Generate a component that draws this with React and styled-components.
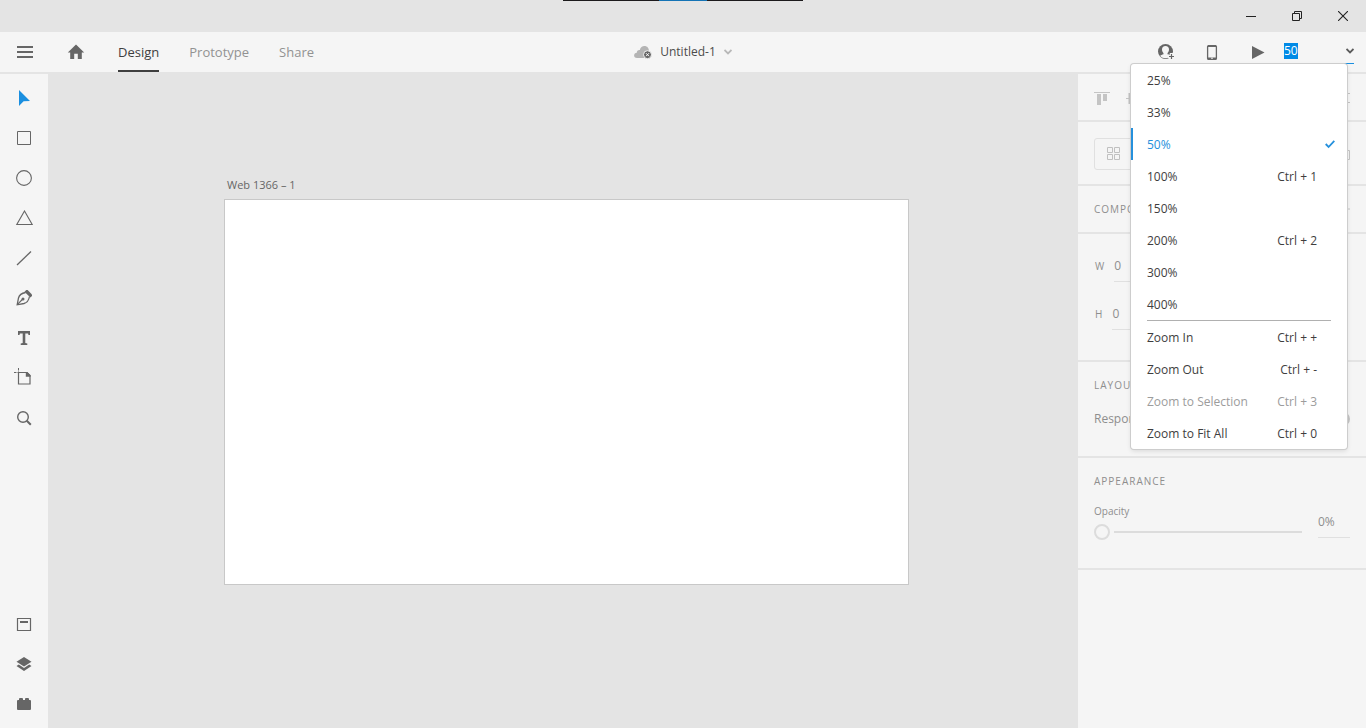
import React, { useEffect, useRef, useState } from "react";
import styled, { createGlobalStyle, css } from "styled-components";

const GlobalStyle = createGlobalStyle`
  *, *::before, *::after { box-sizing: border-box; }
  body {
    margin: 0;
    background: #e4e4e4;
    color: #4b4b4b;
    font: 12px/16px "Open Sans", "Noto Sans", sans-serif;
  }
  button, input { font: inherit; color: inherit; }
  button { border: 0; padding: 0; background: none; cursor: pointer; }
`;

const Page = styled.div`
  min-height: 100vh;
  display: flex;
  flex-direction: column;
`;

const TitleBar = styled.div`
  position: relative;
  height: 32px;
  display: flex;
  justify-content: flex-end;
`;

const TopStrip = styled.div`
  position: absolute;
  top: 0;
  left: 0;
  right: 0;
  display: flex;
  justify-content: center;
`;

const StripPart = styled.span`
  width: ${(p) => (p.$active ? 48 : 96)}px;
  height: 1px;
  background: ${(p) => (p.$active ? "#1473b5" : "#1c1a1c")};
`;

const WindowButton = styled.button`
  width: 46px;
  display: flex;
  align-items: center;
  justify-content: center;
  color: #222;
`;

const Header = styled.header`
  height: 42px;
  display: grid;
  grid-template-columns: 1fr auto 1fr;
  background: #f5f5f5;
  border-bottom: 2px solid #e4e4e4;
`;

const HeaderLeft = styled.div`
  display: flex;
  align-items: stretch;
  padding-left: 16px;
`;

const IconButton = styled.button`
  display: flex;
  align-items: center;
  color: #666;
`;

const HomeLink = styled.a`
  display: flex;
  align-items: center;
  margin-left: 33px;
  color: #666;
`;

const Tabs = styled.nav`
  display: flex;
  gap: 30px;
  margin-left: 33px;
`;

const Tab = styled.a`
  display: flex;
  align-items: center;
  font-size: 13px;
  text-decoration: none;
  color: ${(p) => (p.$active ? "#3e3e3e" : "#929292")};
  box-shadow: ${(p) => (p.$active ? "inset 0 -2px #3e3e3e" : "none")};
`;

const DocumentButton = styled.button`
  display: flex;
  align-items: center;
  gap: 8px;
  color: #4b4b4b;
`;

const HeaderRight = styled.div`
  display: flex;
  justify-content: flex-end;
  padding-right: 12px;
`;

const HeaderActions = styled.div`
  display: flex;
  gap: 28px;
  margin-right: 17px;
`;

const ZoomBox = styled.div`
  position: relative;
  width: 70px;
  height: 32px;
  display: flex;
  align-items: flex-end;
  padding-bottom: 4px;
  border-bottom: 1px solid #1a8fe0;
`;

const ZoomInput = styled.input`
  flex: 1;
  min-width: 0;
  height: 16px;
  padding: 0;
  border: 0;
  outline: 0;
  background: none;
  line-height: 16px;
  &::selection { background: #008ae6; color: #fff; }
`;

const ZoomToggle = styled.button`
  height: 16px;
  display: flex;
  align-items: center;
  color: #5a5a5a;
`;

const Menu = styled.div`
  position: absolute;
  z-index: 2;
  top: 32px;
  right: 7px;
  width: 216px;
  background: #fff;
  border-radius: 3px;
  box-shadow: 0 0 0 1px #cdcdcd, 0 2px 5px rgba(0, 0, 0, 0.12);
`;

const MenuItem = styled.button`
  width: 100%;
  height: 32px;
  display: flex;
  align-items: center;
  justify-content: space-between;
  padding: 2px 12px 0 16px;
  color: #3e3e3e;
  &:disabled { color: #9c9c9c; cursor: default; }
  ${(p) =>
    p.$selected &&
    css`
      color: #2590dc;
      box-shadow: inset 2px 0 #2590dc;
    `}
`;

const Shortcut = styled.span`
  margin-right: 18px;
`;

const MenuDivider = styled.hr`
  height: 1px;
  margin: 0 16px;
  border: 0;
  background: #b0b0b0;
`;

const Workspace = styled.div`
  flex: 1;
  display: flex;
`;

const ToolBar = styled.aside`
  width: 48px;
  display: flex;
  flex-direction: column;
  justify-content: space-between;
  padding: 4px 0;
  background: #f5f5f5;
`;

const ToolButton = styled.button`
  width: 48px;
  height: 40px;
  display: flex;
  align-items: center;
  justify-content: center;
  color: ${(p) => (p.$active ? "#1a8fe0" : "#666")};
`;

const Canvas = styled.main`
  flex: 1;
  padding: 103px 169px 48px 176px;
`;

const ArtboardLabel = styled.div`
  padding: 0 3px;
  margin-bottom: 6px;
  font-size: 11px;
  color: #666;
`;

const Artboard = styled.div`
  aspect-ratio: 685 / 386;
  background: #fff;
  border: 1px solid #c8c8c8;
`;

const Inspector = styled.aside`
  width: 288px;
  background: #f5f5f5;
  color: #8e8e8e;
`;

const Section = styled.section`
  padding: ${(p) => p.$pad || "16px"};
  border-bottom: 2px solid #e4e4e4;
`;

const SpreadRow = styled.div`
  display: flex;
  align-items: center;
  justify-content: space-between;
  margin-top: ${(p) => p.$top || 0}px;
`;

const AlignGroup = styled.div`
  display: flex;
  gap: 16px;
`;

const AlignButton = styled.button`
  width: 16px;
  height: 16px;
  display: flex;
  color: #c4c4c4;
`;

const GridButton = styled.button`
  width: 160px;
  height: 32px;
  display: flex;
  align-items: center;
  padding-left: 12px;
  border: 1px solid #e0e0e0;
  border-radius: 3px;
  color: #c0c0c0;
`;

const SectionTitle = styled.h2`
  margin: 0;
  font-size: 10px;
  line-height: 16px;
  font-weight: 400;
  letter-spacing: 1px;
  text-transform: uppercase;
`;

const Fields = styled.div`
  display: flex;
  flex-direction: column;
  gap: 16px;
`;

const Field = styled.label`
  height: 32px;
  width: 112px;
  display: flex;
  align-items: center;
  gap: 10px;
  padding-left: 1px;
  font-size: 10px;
`;

const NumberInput = styled.input`
  flex: 1;
  min-width: 0;
  height: 32px;
  padding: 0;
  border: 0;
  border-bottom: 1px solid #e0e0e0;
  background: none;
  font-size: 12px;
`;

const Switch = styled.input`
  appearance: none;
  width: 26px;
  height: 14px;
  margin: 0;
  border: 2px solid #c4c4c4;
  border-radius: 7px;
`;

const OpacityRow = styled.div`
  display: flex;
  gap: 16px;
  margin-top: 14px;
`;

const OpacityLabel = styled.label`
  flex: 1;
  display: flex;
  flex-direction: column;
  font-size: 10px;
`;

const Slider = styled.input`
  appearance: none;
  width: 100%;
  height: 16px;
  margin: 5px 0 0;
  background: linear-gradient(#dcdcdc, #dcdcdc) right center / calc(100% - 20px) 2px no-repeat;
  &::-webkit-slider-thumb {
    appearance: none;
    width: 16px;
    height: 16px;
    border: 2px solid #dcdcdc;
    border-radius: 50%;
    background: #f5f5f5;
  }
`;

const OpacityInput = styled(NumberInput)`
  flex: none;
  align-self: center;
  width: 32px;
`;

function Icon({ w = 16, h = w, children, fill = "none", stroke = "currentColor" }) {
  return (
    <svg width={w} height={h} viewBox={`0 0 ${w} ${h}`} fill={fill} stroke={stroke} aria-hidden="true">
      {children}
    </svg>
  );
}

const solid = { fill: "currentColor", stroke: "none" };

function Chevron({ color = "currentColor" }) {
  return (
    <Icon w={8} h={6} stroke={color}>
      <path d="M.5 1 4 4.5 7.5 1" strokeWidth="1.8" />
    </Icon>
  );
}

const drawTools = [
  { name: "Select", icon: <Icon><path {...solid} d="M3 0v16l4.6-4.8L14 11z" /></Icon> },
  { name: "Rectangle", icon: <Icon><path d="M1.5 1.5h13v13h-13z" /></Icon> },
  { name: "Ellipse", icon: <Icon><circle cx="8" cy="8" r="7.4" strokeWidth="1.1" /></Icon> },
  { name: "Polygon", icon: <Icon w={18} h={16}><path d="M9.5 1 17.2 14.500H1.800z" strokeWidth="1.1" /></Icon> },
  { name: "Line", icon: <Icon><path d="M1 15 15 1.5" strokeWidth="1.3" /></Icon> },
  {
    name: "Pen",
    icon: (
      <Icon>
        <path {...solid} d="M10.300 0h1.300L16 4.400v1.500L14.300 7.600 8.500 1.800z" />
        <path d="M9.600 2.500C5.500 3.300 3.300 4.800 2.500 8L1.200 14.800l6.800-1.300c3.200-.8 4.700-2.900 5.500-7" strokeWidth="1.300" />
        <path d="m1.300 14.700 5-5.200" strokeWidth="1.1" />
        <circle {...solid} cx="7" cy="9" r="1.5" />
      </Icon>
    ),
  },
  {
    name: "Text",
    icon: (
      <Icon>
        <path {...solid} d="M2 1h12v4h-1.500l-.4-1.500H9.300v9.500l2 .5V15H4.700v-1.500l2-.5V3.500H3.900L3.500 5H2z" />
      </Icon>
    ),
  },
  {
    name: "Artboard",
    icon: (
      <Icon w={20} h={20}>
        <path d="M0 4.500h2.500M3.500 4.500h1M4.500 0v2.500M4.500 3.500v1" />
        <path d="M4.500 4.500h8.500l3 3v8.500H4.500z" strokeWidth="1.200" />
        <path {...solid} d="M11.800 4h1.500L16.600 7.300v1.500h-4.800z" />
      </Icon>
    ),
  },
  { name: "Zoom", icon: <Icon><circle cx="7" cy="7" r="5.3" strokeWidth="1.4" /><path d="m10.8 10.800 4 4" strokeWidth="2" /></Icon> },
];

const panelTools = [
  { name: "Libraries", icon: <Icon><path d="M1.5 2.500h13v12h-13z" strokeWidth="1.2" /><path d="M4 6h8" strokeWidth="2" /></Icon> },
  {
    name: "Layers",
    icon: (
      <Icon>
        <path {...solid} d="M8 1 15.500 5.700 8 10.400.5 5.700z" />
        <path {...solid} d="m2.800 8.600 5.200 3.300 5.200-3.300 2.300 1.500L8 15 .5 10.100z" />
      </Icon>
    ),
  },
  {
    name: "Plugins",
    icon: <Icon><path {...solid} d="M1 5q0-1 1-1h1V3q0-1 1-1h2q1 0 1 1v1h2V3q0-1 1-1h2q1 0 1 1v1h1q1 0 1 1v8q0 1-1 1H2q-1 0-1-1z" /></Icon>,
  },
];

const zoomLevels = [
  { label: "25%" },
  { label: "33%" },
  { label: "50%", selected: true },
  { label: "100%", shortcut: "Ctrl + 1" },
  { label: "150%" },
  { label: "200%", shortcut: "Ctrl + 2" },
  { label: "300%" },
  { label: "400%" },
];

const zoomCommands = [
  { label: "Zoom In", shortcut: "Ctrl + +" },
  { label: "Zoom Out", shortcut: "Ctrl + -" },
  { label: "Zoom to Selection", shortcut: "Ctrl + 3", disabled: true },
  { label: "Zoom to Fit All", shortcut: "Ctrl + 0" },
];

function ZoomMenuItem({ item }) {
  return (
    <MenuItem type="button" role="menuitem" $selected={item.selected} disabled={item.disabled}>
      {item.label}
      {item.shortcut && <Shortcut>{item.shortcut}</Shortcut>}
      {item.selected && (
        <Icon w={10} h={10}><path d="M.7 4 3.600 7 9.300.8" strokeWidth="1.8" /></Icon>
      )}
    </MenuItem>
  );
}

function ZoomControl() {
  const input = useRef(null);
  const [zoom, setZoom] = useState("50");
  const [open, setOpen] = useState(true);
  useEffect(() => {
    input.current.focus();
    input.current.select();
  }, []);
  return (
    <ZoomBox>
      <ZoomInput ref={input} aria-label="Zoom level" value={zoom} onChange={(e) => setZoom(e.target.value)} />
      <ZoomToggle type="button" aria-label="Zoom levels" aria-expanded={open} onClick={() => setOpen(!open)}>
        <Chevron />
      </ZoomToggle>
      {open && (
        <Menu role="menu">
          {zoomLevels.map((item) => <ZoomMenuItem key={item.label} item={item} />)}
          <MenuDivider />
          {zoomCommands.map((item) => <ZoomMenuItem key={item.label} item={item} />)}
        </Menu>
      )}
    </ZoomBox>
  );
}

function AppHeader() {
  return (
    <Header>
      <HeaderLeft>
        <IconButton type="button" aria-label="Menu">
          <Icon w={18} h={14}><path d="M1 2h16M1 7h16M1 12h16" strokeWidth="2" /></Icon>
        </IconButton>
        <HomeLink href="#home" aria-label="Home">
          <Icon w={18} h={16}>
            <path {...solid} d="M9 .6 17.2 8.500h-2.400V15h-4V9.800H7.200V15h-4V8.500H.8z" />
          </Icon>
        </HomeLink>
        <Tabs>
          <Tab href="#design" $active>Design</Tab>
          <Tab href="#prototype">Prototype</Tab>
          <Tab href="#share">Share</Tab>
        </Tabs>
      </HeaderLeft>
      <DocumentButton type="button">
        <Icon w={18} h={14}>
          <path fill="#b4b4b4" stroke="none" d="M3 13C1 13 .1 11.800.1 10.500c0-1.600 1.100-2.600 2.700-2.800-.1-1.700 1.300-3 3-2.700C6.400 2.600 8.200 1 10.400 1c2.900 0 4.600 2.200 4.500 5 1.300.5 2 1.600 2 3v4z" />
          <circle cx="13.5" cy="9.7" r="4" fill="#666" stroke="#f5f5f5" />
          <path stroke="#fff" d="m12 8.200 3 3m0-3-3 3" />
        </Icon>
        Untitled-1
        <Chevron color="#b8b8b8" />
      </DocumentButton>
      <HeaderRight>
        <HeaderActions>
          <IconButton type="button" aria-label="Invite">
            <Icon w={18} h={18}>
              <circle {...solid} cx="8.500" cy="8.500" r="7.500" />
              <path fill="#f5f5f5" stroke="none" d="M8.500 3c2.200 0 3.500 1.400 3.500 3.600 0 1.500-.6 2.700-1.500 3.600v1.100c1.400.4 2.600.8 3.300 1.700-1.300 1.500-3.200 2.200-5.300 2.200s-4-.7-5.300-2.200c.7-.9 1.900-1.300 3.300-1.700v-1.100C5.600 9.300 5 8.100 5 6.600 5 4.400 6.300 3 8.500 3z" />
              <path stroke="#f5f5f5" strokeWidth="3.500" d="M14.500 10v7M11 13.500h7" />
              <path d="M14.500 11v5M12 13.500h5" strokeWidth="1.2" />
            </Icon>
          </IconButton>
          <IconButton type="button" aria-label="Preview on device">
            <Icon w={18} h={18}>
              <rect x="4.6" y="2.600" width="8.800" height="13.800" rx="1" strokeWidth="1.3" />
              <path d="M5 3h8M5 15.500h8" strokeWidth="2.2" />
              <circle cx="9" cy="15.300" r=".8" fill="#f5f5f5" stroke="none" />
            </Icon>
          </IconButton>
          <IconButton type="button" aria-label="Play preview">
            <Icon w={18} h={18}><path {...solid} d="M3 3v13l12.500-6.500z" /></Icon>
          </IconButton>
        </HeaderActions>
        <ZoomControl />
      </HeaderRight>
    </Header>
  );
}

const alignStart = [
  ["Align top", <><path d="M0 1.5h16" /><path d="M5 3v11M11 3v7" strokeWidth="4" /></>],
  ["Align middle", <><path d="M0 7.5h16" /><path d="M4 2v11M11 4v7" strokeWidth="3" /></>],
  ["Align bottom", <><path d="M0 14.5h16" /><path d="M5 2v11M11 6v7" strokeWidth="4" /></>],
  ["Distribute horizontally", <path d="M2.5 2v12M13.5 2v12M8 5v6" />],
];

const alignEnd = [
  ["Align left", <><path d="M1.5 0v16" /><path d="M3 5h11M3 11h7" strokeWidth="3" /></>],
  ["Align center", <><path d="M7.5 0v16" /><path d="M2 5h11M4 11h7" strokeWidth="3" /></>],
  ["Align right", <><path d="M14.5 0v16" /><path d="M2 5h11M6 11h7" strokeWidth="3" /></>],
  ["Distribute vertically", <path d="M2 2.500h14M2 11.500h14M5 7h6" />],
];

function Alignment({ items }) {
  return (
    <AlignGroup>
      {items.map(([name, shape]) => (
        <AlignButton key={name} type="button" aria-label={name}><Icon>{shape}</Icon></AlignButton>
      ))}
    </AlignGroup>
  );
}

function PropertyPanel() {
  return (
    <Inspector>
      <Section $pad="17px 16px 13px">
        <SpreadRow><Alignment items={alignStart} /><Alignment items={alignEnd} /></SpreadRow>
      </Section>
      <Section $pad="16px 16px 14px">
        <SpreadRow>
          <GridButton type="button" aria-label="Repeat grid">
            <Icon w={14} h={14}><path d="M.5.5h5v5h-5zM7.500.5h5v5h-5zM.5 7.500h5v5h-5zM7.500 7.500h5v5h-5z" /></Icon>
          </GridButton>
          <AlignButton type="button" aria-label="Combine shapes">
            <Icon><path d="M1.5 1.5h9v9h-9zM7 4.500h8.500v9H6.500v-3" /></Icon>
          </AlignButton>
        </SpreadRow>
      </Section>
      <Section $pad="15px 16px">
        <SpreadRow>
          <SectionTitle>Component</SectionTitle>
          <AlignButton type="button" aria-label="Add component"><Icon><path d="M11.5 3.500v9M7 8h9" /></Icon></AlignButton>
        </SpreadRow>
      </Section>
      <Section $pad="16px 16px 30px">
        <Fields>
          <Field>W<NumberInput defaultValue="0" /></Field>
          <Field>H<NumberInput defaultValue="0" /></Field>
        </Fields>
      </Section>
      <Section $pad="15px 16px 29px">
        <SectionTitle>Layout</SectionTitle>
        <SpreadRow as="label" $top={18}>
          Responsive Resize
          <Switch type="checkbox" />
        </SpreadRow>
      </Section>
      <Section $pad="15px 16px 28px">
        <SectionTitle>Appearance</SectionTitle>
        <OpacityRow>
          <OpacityLabel>
            Opacity
            <Slider type="range" min="0" max="100" defaultValue="0" />
          </OpacityLabel>
          <OpacityInput aria-label="Opacity value" defaultValue="0%" />
        </OpacityRow>
      </Section>
    </Inspector>
  );
}

function Tools({ items, active }) {
  return (
    <div>
      {items.map((tool) => (
        <ToolButton key={tool.name} type="button" aria-label={tool.name} $active={tool.name === active}>
          {tool.icon}
        </ToolButton>
      ))}
    </div>
  );
}

export default function App() {
  return (
    <Page>
      <GlobalStyle />
      <TitleBar>
        <TopStrip><StripPart /><StripPart $active /><StripPart /></TopStrip>
        <WindowButton type="button" aria-label="Minimize">
          <Icon w={10} h={10}><path d="M0 5.5h10" /></Icon>
        </WindowButton>
        <WindowButton type="button" aria-label="Restore">
          <Icon w={10} h={10}><path d="M.5 2.500h7v7h-7zM2.500 2.500v-2h7v7h-2" /></Icon>
        </WindowButton>
        <WindowButton type="button" aria-label="Close">
          <Icon w={10} h={10}><path d="m0 0 10 10M10 0 0 10" strokeWidth="1.1" /></Icon>
        </WindowButton>
      </TitleBar>
      <AppHeader />
      <Workspace>
        <ToolBar>
          <Tools items={drawTools} active="Select" />
          <Tools items={panelTools} />
        </ToolBar>
        <Canvas>
          <ArtboardLabel>Web 1366 – 1</ArtboardLabel>
          <Artboard />
        </Canvas>
        <PropertyPanel />
      </Workspace>
    </Page>
  );
}
